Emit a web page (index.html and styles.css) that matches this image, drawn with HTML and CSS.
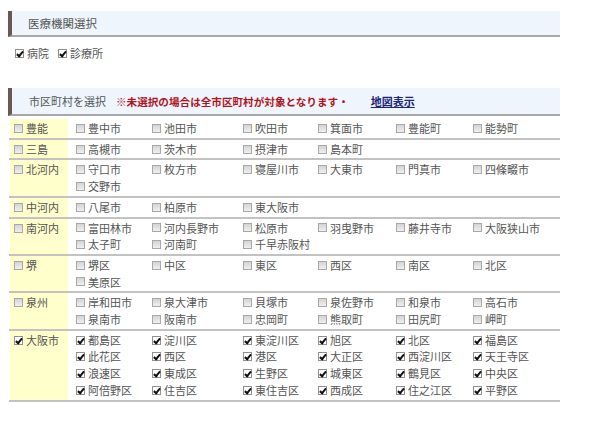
FILE: index.html
```html
<!DOCTYPE html>
<html lang="ja">
<head>
<meta charset="utf-8">
<link rel="stylesheet" href="styles.css">
</head>
<body>
<div class="page">
  <div class="sec-head head1">医療機関選択</div>
  <div class="types">
    <label class="chk"><span class="cb on"></span>病院</label>
    <label class="chk"><span class="cb on"></span>診療所</label>
  </div>
  <div class="sec-head head2">
    <span class="title">市区町村を選択</span>
    <span class="note">※未選択の場合は全市区町村が対象となります・</span>
    <a class="map" href="#">地図表示</a>
  </div>
  <div class="areas">
    <div class="row">
      <div class="region"><span class="cb"></span>豊能</div>
      <div class="cities">
        <span class="item"><span class="cb"></span>豊中市</span>
        <span class="item"><span class="cb"></span>池田市</span>
        <span class="item"><span class="cb"></span>吹田市</span>
        <span class="item"><span class="cb"></span>箕面市</span>
        <span class="item"><span class="cb"></span>豊能町</span>
        <span class="item"><span class="cb"></span>能勢町</span>
      </div>
    </div>
    <div class="row">
      <div class="region"><span class="cb"></span>三島</div>
      <div class="cities">
        <span class="item"><span class="cb"></span>高槻市</span>
        <span class="item"><span class="cb"></span>茨木市</span>
        <span class="item"><span class="cb"></span>摂津市</span>
        <span class="item"><span class="cb"></span>島本町</span>
      </div>
    </div>
    <div class="row">
      <div class="region"><span class="cb"></span>北河内</div>
      <div class="cities">
        <span class="item"><span class="cb"></span>守口市</span>
        <span class="item"><span class="cb"></span>枚方市</span>
        <span class="item"><span class="cb"></span>寝屋川市</span>
        <span class="item"><span class="cb"></span>大東市</span>
        <span class="item"><span class="cb"></span>門真市</span>
        <span class="item"><span class="cb"></span>四條畷市</span>
        <span class="item"><span class="cb"></span>交野市</span>
      </div>
    </div>
    <div class="row">
      <div class="region"><span class="cb"></span>中河内</div>
      <div class="cities">
        <span class="item"><span class="cb"></span>八尾市</span>
        <span class="item"><span class="cb"></span>柏原市</span>
        <span class="item"><span class="cb"></span>東大阪市</span>
      </div>
    </div>
    <div class="row">
      <div class="region"><span class="cb"></span>南河内</div>
      <div class="cities">
        <span class="item"><span class="cb"></span>富田林市</span>
        <span class="item"><span class="cb"></span>河内長野市</span>
        <span class="item"><span class="cb"></span>松原市</span>
        <span class="item"><span class="cb"></span>羽曳野市</span>
        <span class="item"><span class="cb"></span>藤井寺市</span>
        <span class="item"><span class="cb"></span>大阪狭山市</span>
        <span class="item"><span class="cb"></span>太子町</span>
        <span class="item"><span class="cb"></span>河南町</span>
        <span class="item"><span class="cb"></span>千早赤阪村</span>
      </div>
    </div>
    <div class="row">
      <div class="region"><span class="cb"></span>堺</div>
      <div class="cities">
        <span class="item"><span class="cb"></span>堺区</span>
        <span class="item"><span class="cb"></span>中区</span>
        <span class="item"><span class="cb"></span>東区</span>
        <span class="item"><span class="cb"></span>西区</span>
        <span class="item"><span class="cb"></span>南区</span>
        <span class="item"><span class="cb"></span>北区</span>
        <span class="item"><span class="cb"></span>美原区</span>
      </div>
    </div>
    <div class="row">
      <div class="region"><span class="cb"></span>泉州</div>
      <div class="cities">
        <span class="item"><span class="cb"></span>岸和田市</span>
        <span class="item"><span class="cb"></span>泉大津市</span>
        <span class="item"><span class="cb"></span>貝塚市</span>
        <span class="item"><span class="cb"></span>泉佐野市</span>
        <span class="item"><span class="cb"></span>和泉市</span>
        <span class="item"><span class="cb"></span>高石市</span>
        <span class="item"><span class="cb"></span>泉南市</span>
        <span class="item"><span class="cb"></span>阪南市</span>
        <span class="item"><span class="cb"></span>忠岡町</span>
        <span class="item"><span class="cb"></span>熊取町</span>
        <span class="item"><span class="cb"></span>田尻町</span>
        <span class="item"><span class="cb"></span>岬町</span>
      </div>
    </div>
    <div class="row">
      <div class="region"><span class="cb on"></span>大阪市</div>
      <div class="cities">
        <span class="item"><span class="cb on"></span>都島区</span>
        <span class="item"><span class="cb on"></span>淀川区</span>
        <span class="item"><span class="cb on"></span>東淀川区</span>
        <span class="item"><span class="cb on"></span>旭区</span>
        <span class="item"><span class="cb on"></span>北区</span>
        <span class="item"><span class="cb on"></span>福島区</span>
        <span class="item"><span class="cb on"></span>此花区</span>
        <span class="item"><span class="cb on"></span>西区</span>
        <span class="item"><span class="cb on"></span>港区</span>
        <span class="item"><span class="cb on"></span>大正区</span>
        <span class="item"><span class="cb on"></span>西淀川区</span>
        <span class="item"><span class="cb on"></span>天王寺区</span>
        <span class="item"><span class="cb on"></span>浪速区</span>
        <span class="item"><span class="cb on"></span>東成区</span>
        <span class="item"><span class="cb on"></span>生野区</span>
        <span class="item"><span class="cb on"></span>城東区</span>
        <span class="item"><span class="cb on"></span>鶴見区</span>
        <span class="item"><span class="cb on"></span>中央区</span>
        <span class="item"><span class="cb on"></span>阿倍野区</span>
        <span class="item"><span class="cb on"></span>住吉区</span>
        <span class="item"><span class="cb on"></span>東住吉区</span>
        <span class="item"><span class="cb on"></span>西成区</span>
        <span class="item"><span class="cb on"></span>住之江区</span>
        <span class="item"><span class="cb on"></span>平野区</span>
      </div>
    </div>
  </div>
</div>
</body>
</html>
```

FILE: styles.css
```css
html, body {
  margin: 0;
  padding: 0;
  background: #ffffff;
}

body {
  font-family: "Noto Sans CJK JP", "Noto Sans", sans-serif;
  font-size: 11px;
  color: #555555;
}

.page {
  padding: 11px 0 0 8px;
  width: 552px;
}

.sec-head {
  background: #eef5fd;
  border-left: 4px solid #6b5853;
  border-bottom: 2px solid #a8a8a8;
  box-sizing: border-box;
  display: flex;
  align-items: center;
  font-size: 11.5px;
  color: #555555;
}

.head1 {
  height: 26px;
  padding-left: 16px;
}

.types {
  display: flex;
  gap: 9px;
  margin: 8px 0 0 7px;
  height: 16px;
  line-height: 16px;
  font-size: 11px;
}

.chk {
  display: flex;
  align-items: center;
}

.head2 {
  margin-top: 27px;
  height: 28px;
  padding-left: 17px;
}

.title {
  font-size: 11px;
  margin-right: 10px;
}

.note {
  color: #b0141c;
  font-weight: bold;
  font-size: 10.6px;
  margin-right: 22px;
}

.map {
  color: #1c2478;
  font-weight: bold;
  font-size: 11px;
  text-decoration: underline;
}

.areas {
  padding-top: 3px;
}

.row {
  display: flex;
  border-bottom: 2px solid #c2c2c2;
  margin-left: 1px;
}

.region {
  flex: none;
  width: 58px;
  margin-left: 1px;
  background: #ffffcc;
  padding: 1px 0 1px 4px;
  line-height: 16.7px;
  display: flex;
  align-items: flex-start;
  box-sizing: border-box;
}

.region .cb {
  margin-top: 4px;
}

.cities {
  flex: 1;
  display: grid;
  grid-template-columns: 76px 91px 75px 78px 77px auto;
  padding: 1px 0 1px 8px;
  line-height: 16.7px;
}

.item {
  display: flex;
  align-items: center;
  white-space: nowrap;
}

.cb {
  display: inline-block;
  position: relative;
  flex: none;
  width: 9px;
  height: 9px;
  border: 1px solid #a8a8a8;
  background: linear-gradient(#d4d4d4, #efefef);
  margin-right: 3px;
  box-sizing: border-box;
}

.cb.on {
  background: #ffffff;
  border-color: #909090;
}

.cb.on::after {
  content: "";
  position: absolute;
  left: 2px;
  top: 0px;
  width: 2px;
  height: 5px;
  border-right: 2px solid #111111;
  border-bottom: 2px solid #111111;
  transform: rotate(40deg);
}
```
